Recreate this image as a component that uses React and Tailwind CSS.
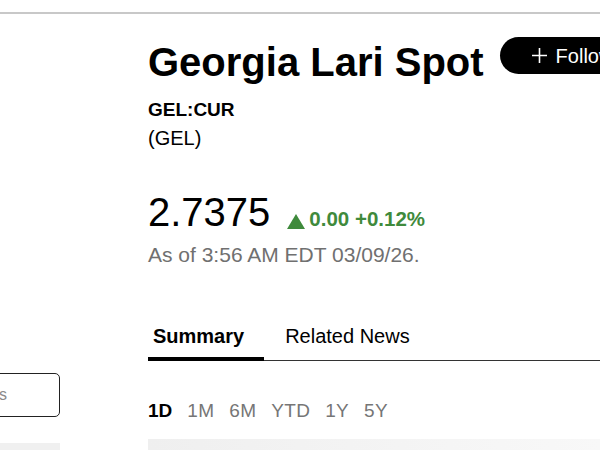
import React from "react";

const ranges = ["1D", "1M", "6M", "YTD", "1Y", "5Y"];

const App = () => {
  return (
    <div
      className="w-[600px] h-[450px] overflow-hidden bg-white text-black"
      style={{ fontFamily: '"Liberation Sans", Arial, sans-serif' }}
    >
      {/* top rule */}
      <div className="h-[12px]" />
      <div className="h-[2px] bg-[#c8c8c8]" />

      <div className="flex">
        {/* left rail, mostly cut off */}
        <div className="w-[60px] shrink-0 overflow-hidden">
          <div className="mt-[359px] ml-[-200px] w-[260px] h-[44px] border-[1.5px] border-[#222] rounded-[5px] flex items-center justify-end pr-[52px] text-[16px] text-[#8a8a8a]">
            Search quotes
          </div>
          <div className="mt-[26px] h-[40px] bg-[#f0f0f0]" />
        </div>

        {/* main column */}
        <div className="ml-[88px] flex-1 min-w-0">
          <div className="mt-[24px] flex items-start gap-[16px] whitespace-nowrap">
            <h1 className="text-[40px] leading-[48px] font-bold">Georgia Lari Spot</h1>
            <button className="mt-[-1px] h-[37px] shrink-0 rounded-full bg-black text-white flex items-center pl-[31px] pr-[30px] gap-[8px] text-[20px]">
              <svg width="17" height="17" viewBox="0 0 17 17" fill="none" stroke="white" strokeWidth="1.6">
                <path d="M8.5 1v15M1 8.5h15" />
              </svg>
              Follow
            </button>
          </div>

          <div className="mt-[12px] text-[19px] leading-[24px] font-bold">GEL:CUR</div>
          <div className="mt-[4px] text-[20px] leading-[24px]">(GEL)</div>

          <div className="mt-[39px] flex items-baseline whitespace-nowrap">
            <span className="text-[40px] leading-[46px]">2.7375</span>
            <span className="ml-[17px] flex items-baseline gap-[4px] text-[20.5px] font-bold text-[#3f8a3c]">
              <svg width="18" height="15" viewBox="0 0 18 15" className="self-center translate-y-[2px]">
                <polygon points="9,0 18,15 0,15" fill="#3f8a3c" />
              </svg>
              0.00 +0.12%
            </span>
          </div>

          <div className="mt-[7px] text-[21px] leading-[25px] text-[#707070] whitespace-nowrap">
            As of 3:56 AM EDT 03/09/26.
          </div>

          <div className="mt-[57px] flex border-b-[1.5px] border-[#333] text-[20px] leading-[24px] whitespace-nowrap">
            <div className="pl-[5px] pr-[20px] pb-[9px] border-b-4 border-black mb-[-1.5px] font-bold">Summary</div>
            <div className="pl-[21px] pb-[9px]">Related News</div>
          </div>

          <div className="mt-[39px] flex gap-[15px] text-[19px] leading-[22px] tracking-[0.3px] text-[#767676]">
            {ranges.map((r, i) => (
              <span key={r} className={i === 0 ? "font-bold text-black tracking-normal" : ""}>
                {r}
              </span>
            ))}
          </div>

          <div className="mt-[17px] h-[40px] bg-gradient-to-r from-[#efefef] to-[#f8f8f8]" />
        </div>
      </div>
    </div>
  );
};

export default App;
